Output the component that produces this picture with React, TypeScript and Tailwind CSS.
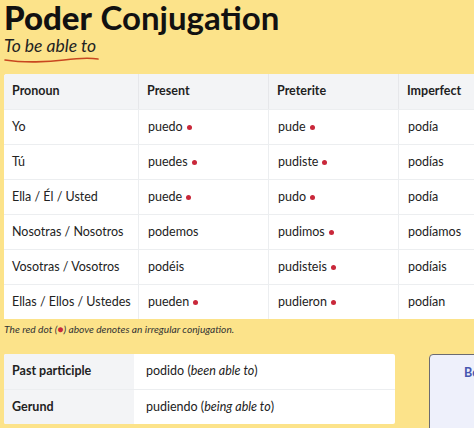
import React from "react";

type Cell = { text: string; irregular?: boolean };

const rows: { pronoun: string; forms: Cell[] }[] = [
  { pronoun: "Yo", forms: [{ text: "puedo", irregular: true }, { text: "pude", irregular: true }, { text: "podía" }] },
  { pronoun: "Tú", forms: [{ text: "puedes", irregular: true }, { text: "pudiste", irregular: true }, { text: "podías" }] },
  { pronoun: "Ella / Él / Usted", forms: [{ text: "puede", irregular: true }, { text: "pudo", irregular: true }, { text: "podía" }] },
  { pronoun: "Nosotras / Nosotros", forms: [{ text: "podemos" }, { text: "pudimos", irregular: true }, { text: "podíamos" }] },
  { pronoun: "Vosotras / Vosotros", forms: [{ text: "podéis" }, { text: "pudisteis", irregular: true }, { text: "podíais" }] },
  { pronoun: "Ellas / Ellos / Ustedes", forms: [{ text: "pueden", irregular: true }, { text: "pudieron", irregular: true }, { text: "podían" }] },
];

function Dot() {
  return <span className="ml-[4px] inline-block h-[5px] w-[5px] rounded-full bg-[#c9283a] align-middle" />;
}

export default function App() {
  return (
    <div
      className="h-[428px] w-[474px] overflow-hidden bg-[#fce38a] pl-[4px] text-[#222]"
      style={{ fontFamily: "Lato, 'Noto Sans', sans-serif" }}
    >
      {/* Heading */}
      <h1 className="-mt-[1px] mb-[-1px] text-[33px] leading-[36px] text-[#111]">
        <span className="font-black">Poder</span> <span className="font-bold">Conjugation</span>
      </h1>
      <div className="relative inline-block">
        <p className="text-[17.5px] italic leading-[22px] text-[#222]">To be able to</p>
        <svg className="block h-[6px] w-[96px]" viewBox="0 0 96 6">
          <path d="M1 3 C 20 6, 45 5, 60 3 S 88 1, 94 2" fill="none" stroke="#c8461f" strokeWidth="1.6" strokeLinecap="round" />
        </svg>
      </div>

      {/* Conjugation table */}
      <div className="mt-[11px] w-[540px] overflow-hidden rounded-tl-[3px] bg-white text-[12.5px]">
        <div className="grid h-[35px] grid-cols-[134px_130px_130px_130px] bg-[#f3f4f6] font-bold text-[#1f1f1f]">
          {["Pronoun", "Present", "Preterite", "Imperfect"].map((h, i) => (
            <div key={h} className={`flex items-center pl-[8px] ${i > 0 ? "border-l border-[#e6e7ea]" : ""}`}>
              {h}
            </div>
          ))}
        </div>
        {rows.map((r) => (
          <div key={r.pronoun} className="grid h-[35px] grid-cols-[134px_130px_130px_130px] border-t border-[#eceef0]">
            <div className="flex items-center pl-[8px]">{r.pronoun}</div>
            {r.forms.map((f, i) => (
              <div key={i} className="flex items-center border-l border-[#eceef0] pl-[9px]">
                {f.text}
                {f.irregular && <Dot />}
              </div>
            ))}
          </div>
        ))}
      </div>

      <p className="mt-[4px] text-[10.2px] italic leading-[12px] text-[#333]">
        The red dot (<span className="text-[#c9283a]">●</span>) above denotes an irregular conjugation.
      </p>

      {/* Participles and card */}
      <div className="mt-[19px] flex items-start">
        <div className="w-[391px] shrink-0 overflow-hidden rounded-[2px] bg-white text-[12.5px]">
          <div className="grid h-[35px] grid-cols-[130px_1fr]">
            <div className="flex items-center bg-[#f3f4f6] pl-[8px] font-bold">Past participle</div>
            <div className="flex items-center pl-[12px]">
              podido (<em>been able to</em>)
            </div>
          </div>
          <div className="grid h-[35px] grid-cols-[130px_1fr] border-t border-[#eceef0]">
            <div className="flex items-center bg-[#f3f4f6] pl-[8px] font-bold">Gerund</div>
            <div className="flex items-center pl-[12px]">
              pudiendo (<em>being able to</em>)
            </div>
          </div>
        </div>
        <div className="ml-[34px] h-[80px] w-[120px] shrink-0 rounded-tl-[4px] border-[1.5px] border-[#6b6b72] bg-[#eef0fb] pl-[34px] pt-[9px] text-[12.5px] font-bold text-[#4556b0]">
          Become
        </div>
      </div>
    </div>
  );
}
